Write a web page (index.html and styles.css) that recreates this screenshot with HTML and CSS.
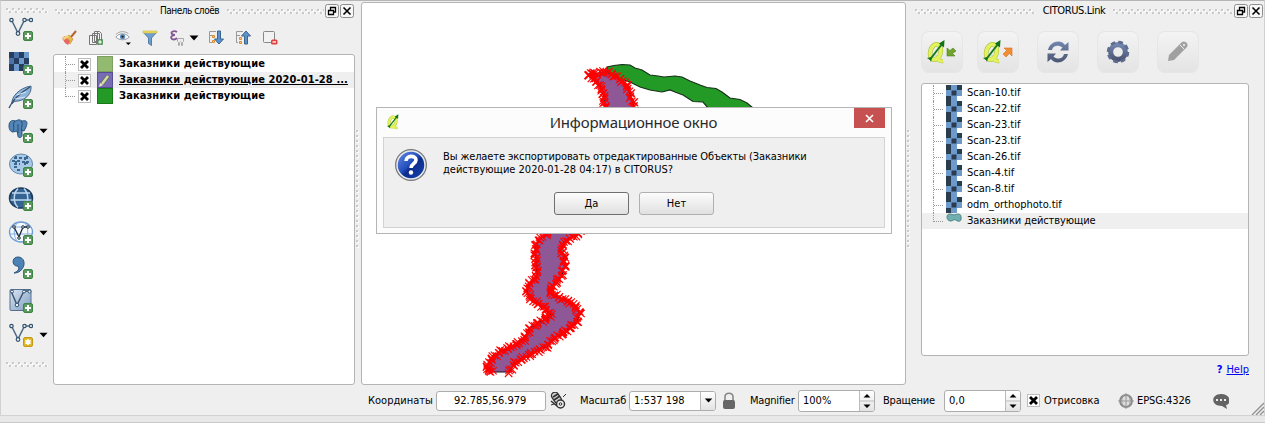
FILE: index.html
```html
<!DOCTYPE html>
<html lang="ru">
<head>
<meta charset="utf-8">
<title>QGIS</title>
<link rel="stylesheet" href="styles.css">
</head>
<body>
<svg class="defs" width="0" height="0">
  <defs>
    <linearGradient id="steel" x1="0" y1="0" x2="0" y2="1"><stop offset="0" stop-color="#7386ae"/><stop offset="1" stop-color="#4b5672"/></linearGradient>
    <linearGradient id="ball" x1="0" y1="0" x2="1" y2="1"><stop offset="0" stop-color="#6f93ea"/><stop offset=".45" stop-color="#2450bd"/><stop offset=".55" stop-color="#0c2c8c"/><stop offset="1" stop-color="#1a49b8"/></linearGradient>
    <linearGradient id="pane" x1="0" y1="0" x2="1" y2="1"><stop offset="0" stop-color="#dbe6f3"/><stop offset="1" stop-color="#7e9cc0"/></linearGradient>
    <symbol id="plus" viewBox="0 0 10 10"><rect x=".5" y=".5" width="9" height="9" rx="1.500" fill="#5b9a5d" stroke="#3f8344"/><path d="M5 2v6M2 5h6" stroke="#fff" stroke-width="2"/></symbol>
    <symbol id="vee" viewBox="0 0 24 20"><path d="M2.500 3 9 16 15.500 3H22" fill="none" stroke="#4c6a86" stroke-width="1.500"/><g fill="#e8eef5" stroke="#35536f" stroke-width="1.200"><circle cx="2.500" cy="3" r="1.700"/><circle cx="9" cy="16.500" r="1.800"/><circle cx="15.500" cy="3" r="1.700"/><circle cx="22" cy="3" r="1.700"/></g></symbol>
    <symbol id="tif" viewBox="0 0 16 16"><path fill="#6e99cb" d="M0 5h16v6H0zM5 0h6v16H5z"/><path fill="#293c50" d="M0 0h5v5H0zM11 0h5v5h-5zM5.500 5.500h5v5h-5zM0 11h5v5H0z"/></symbol>
    <symbol id="qlogo" viewBox="0 0 20 24"><ellipse cx="8.500" cy="12" rx="5.200" ry="7.800" transform="rotate(14 8.500 12)" fill="none" stroke="#a9ba3c" stroke-width="4.600"/><path fill="none" stroke="#a9ba3c" stroke-width="4" d="M8 17c2 1 3 5 8 4"/><ellipse cx="8.500" cy="12" rx="5.200" ry="7.800" transform="rotate(14 8.500 12)" fill="none" stroke="#e2f25c" stroke-width="3.600"/><path fill="none" stroke="#e2f25c" stroke-width="3" d="M8 17c2 1 3 5 8 4"/><path d="M3 19.500 15 4" stroke="#167a1d" stroke-width="2"/><path fill="#107217" d="m17.500 0-.5 7.500-5-4zM0 18l5-1-1 5-1-2z"/></symbol>
    <symbol id="float" viewBox="0 0 14 14"><rect x=".5" y=".5" width="13" height="13" rx="2" fill="#f6f6f6" stroke="#8d8d8d"/><path fill="none" stroke="#000" stroke-width="1.300" d="M5.500 6V3.500h5V8H9M3.500 6.500H8.500V10.500H3.500z"/></symbol>
    <symbol id="close" viewBox="0 0 14 14"><rect x=".5" y=".5" width="13" height="13" rx="2" fill="#f6f6f6" stroke="#8d8d8d"/><path stroke="#000" stroke-width="1.600" d="m3.500 3.500 7 7m0-7-7 7"/></symbol>
    <symbol id="check" viewBox="0 0 13 13"><rect x=".5" y=".5" width="12" height="12" fill="#fff" stroke="#bdbdbd"/><path stroke="#000" stroke-width="2.800" d="m3 3 7 7m0-7-7 7"/></symbol>
    <symbol id="drop" viewBox="0 0 10 6"><path d="M.5.500h9L5 5.500z"/></symbol>
    <pattern id="dots" width="6" height="5" patternUnits="userSpaceOnUse"><path fill="#c9c9c9" d="M0 0h2v2H0zM3 3h2v2H3z"/><path fill="#fff" d="M2 1h1v2H1V2h1zM5 3h1v2H5z"/></pattern>
    <pattern id="vdots" width="4" height="5" patternUnits="userSpaceOnUse"><path fill="#fff" d="M1 1h2v2H1z"/><path fill="#c9c9c9" d="M0 0h2v2H0z"/></pattern>
  </defs>
</svg>

<div class="window">
  <div class="main">
    <aside class="toolbar">
      <svg class="grip" width="42" height="5"><rect width="42" height="5" fill="url(#dots)"/></svg>
      <div class="tool"><svg width="26" height="26"><use href="#vee" x="1" y="1" width="24" height="20"/><use href="#plus" x="15" y="15" width="10" height="10"/></svg></div>
      <div class="tool"><svg width="26" height="26"><path fill="#6e99cb" d="M1 2h20v19H1z"/><path fill="#263d5f" d="M1 2h5v6H1zM11 2h5v6h-5zM6 8h5v6H6zM16 8h5v6h-5zM1 14h5v7H1zM11 14h5v7h-5z"/><path fill="#4a73aa" d="M6 2h5v6H6zM1 8h5v6H1z"/><use href="#plus" x="15" y="15" width="10" height="10"/></svg></div>
      <div class="tool"><svg width="26" height="26"><path fill="#8fb4da" stroke="#466789" d="M4 20C3 13 11 4 23 2c1 7-5 14-13 15-3 0-5 1-6 3z"/><path fill="none" stroke="#2f4d6d" stroke-width="1.300" d="M1 24C5 15 12 9 22 3"/><path stroke="#dbe9f7" d="m9 11 9-3M7 15l10-2"/><use href="#plus" x="15" y="15" width="10" height="10"/></svg></div>
      <div class="tool"><svg width="26" height="26"><path fill="#5386b6" stroke="#2c567f" d="M1 8c0-6 4-6 7-5 3-2 4-1 6 0 5-1 6 1 4 6l-2 4-2-1v6c-1 2-4 2-4 0l-1-5-4 1C3 14 1 12 1 8z"/><path fill="none" stroke="#264c72" d="M7 3c-3 3 0 7-2 10M13 3c3 3-1 7 1 10M10 6v9"/><use href="#plus" x="15" y="15" width="10" height="10"/></svg><svg class="arrow"><use href="#drop"/></svg></div>
      <div class="tool"><svg width="26" height="26"><ellipse cx="13" cy="12" rx="11.500" ry="10" fill="#a9c9e8" stroke="#6289ae"/><path fill="none" stroke="#3b668e" stroke-width="2" stroke-dasharray="3 2" d="M6 6h13M4 9h8M6 12h6M14 10h7M6 15h5M9 18h4M8 4v12M17 5v9M19 4v8"/><use href="#plus" x="15" y="15" width="10" height="10"/></svg><svg class="arrow"><use href="#drop"/></svg></div>
      <div class="tool"><svg width="26" height="26"><ellipse cx="13" cy="12" rx="11.500" ry="10" fill="#356392" stroke="#1d3b5b" stroke-width="1.500"/><path fill="none" stroke="#bdd9f2" stroke-width="1.500" d="M4 7h18M2.500 14h21M10 2.500c-5 5-5 14 0 19M16 2.500c5 5 5 14 0 19"/><use href="#plus" x="15" y="15" width="10" height="10"/></svg></div>
      <div class="tool"><svg width="26" height="26"><ellipse cx="13" cy="12" rx="11.500" ry="10" fill="#f5f9fe" stroke="#6a9bd0" stroke-width="1.300"/><path fill="none" stroke="#86aedb" d="M3 7h20M1.500 14h23M10 2c-5 5-5 15 0 20M16 2c5 5 5 15 0 20"/><path fill="none" stroke="#1d2c3a" stroke-width="1.300" d="m6 7 5 10 4-10h5"/><g fill="#fff" stroke="#1d2c3a"><circle cx="6" cy="7" r="1.300"/><circle cx="11" cy="18" r="1.300"/><circle cx="15" cy="7" r="1.300"/><circle cx="20" cy="7" r="1.300"/></g><use href="#plus" x="15" y="15" width="10" height="10"/></svg><svg class="arrow"><use href="#drop"/></svg></div>
      <div class="tool"><svg width="26" height="26"><path fill="#4d82b5" stroke="#2b557d" d="M10 12c-6 1-7-9 0-9 6 0 8 7 4 12-2 3-5 4-8 4 4-2 6-4 4-7z"/><use href="#plus" x="15" y="15" width="10" height="10"/></svg></div>
      <div class="tool"><svg width="26" height="26"><rect x="2" y="1.500" width="21" height="21" rx="1" fill="url(#pane)" stroke="#55708e"/><path fill="none" stroke="#3c5873" stroke-width="1.500" d="m3 3 6 14 7-14h7"/><g fill="#eaf0f7" stroke="#35536f"><circle cx="4" cy="3.500" r="1.500"/><circle cx="9" cy="17" r="1.800"/><circle cx="16" cy="3.500" r="1.500"/><circle cx="21.500" cy="3.500" r="1.500"/></g><use href="#plus" x="15" y="15" width="10" height="10"/></svg></div>
      <div class="tool"><svg width="26" height="26"><use href="#vee" x="1" y="1" width="24" height="20"/><rect x="15.500" y="15.500" width="9" height="9" rx="1.500" fill="#dfb626" stroke="#c39b10"/><path stroke="#fff" stroke-width="1.500" d="M20 17v6M17.300 18.500l5.400 3M22.700 18.500l-5.400 3"/></svg><svg class="arrow"><use href="#drop"/></svg></div>
      <svg class="grip low" width="42" height="5"><rect width="42" height="5" fill="url(#dots)"/></svg>
    </aside>

    <section class="layers">
      <header class="dock-title"><svg class="rail"><rect width="100%" height="5" fill="url(#dots)"/></svg><span class="t-layers">Панель слоёв</span><svg class="rail"><rect width="100%" height="5" fill="url(#dots)"/></svg><svg class="wbtn"><use href="#float"/></svg><svg class="wbtn"><use href="#close"/></svg></header>
      <div class="layer-tools">
        <svg class="ic" viewBox="0 0 16 16"><path d="m15 1-5 6" stroke="#b8642c" stroke-width="2"/><path fill="#e8b74e" stroke="#c98732" stroke-width=".7" d="m8 5 4 4-3 5-6-5z"/><path fill="#e46a5f" d="m1 8 3-2 5 5-2 4-3-2z"/><path fill="#f3d576" d="m1 8 6-3 1 2-5 3z"/></svg>
        <svg class="ic" viewBox="0 0 16 16"><path fill="#f3f3f3" stroke="#777" d="M1.500 5.500h7v9h-7zM4.500 3.500h7v9h-7zM6.500 1.500h5l2 2v8h-7zM9.500 2v9"/><use href="#plus" x="9" y="9" width="6" height="6"/></svg>
        <svg class="ic eye" viewBox="0 0 18 16"><path fill="#fff" stroke="#8c9197" d="M1 7c4-5 11-5 15 0-4 4-11 4-15 0z"/><circle cx="8.500" cy="6.500" r="3" fill="#5e8fc0"/><circle cx="8.500" cy="6.500" r="1.300" fill="#222"/><path fill="none" stroke="#999" d="M1 4c4-4 10-4 14-1"/><path d="M12 13h6l-3 3z"/></svg>
        <svg class="ic" viewBox="0 0 16 16"><path fill="#6f9fce" stroke="#527da9" d="M1 2h14L9.500 8v7.500l-3-2V8z"/><path fill="#f0df5b" stroke="#c9b741" stroke-width=".6" d="M1 1h14v2H1z"/></svg>
        <svg class="ic" viewBox="0 0 16 16"><path fill="none" stroke="#835791" stroke-width="1.800" d="M8 2C5 0 1 2 3 4c1 1 2 1 3 1-3 0-5 2-3 4 2 1 4 0 5-1"/><path fill="#eee" stroke="#aaa" d="M8.500 8.500h6v3l-1 1v3h-1v-3l-1-1-1 1v3h-1v-3l-1-1z"/></svg>
        <svg class="arrow in"><use href="#drop"/></svg>
        <svg class="ic" viewBox="0 0 16 16"><path fill="none" stroke="#999" d="M8 1.500H1.500v11H4M2 5.500h3"/><path fill="#f2cf9f" stroke="#df8a2b" d="M4.500 5.500h2v2h-2zM4.500 10.500h2v2h-2z"/><path fill="#5d92ca" stroke="#39658f" d="M9.500 1h3v8h3L11 14 6.500 9h3z"/></svg>
        <svg class="ic" viewBox="0 0 16 16"><path fill="none" stroke="#999" d="M8 1.500H1.500v11H3M2 5.500h3"/><path fill="#f2cf9f" stroke="#df8a2b" d="M4.500 7.500h2v2h-2zM4.500 11.500h2v2h-2z"/><path fill="#5d92ca" stroke="#39658f" d="M9.500 14h3V6h3L11 1 6.500 6h3z"/></svg>
        <svg class="ic" viewBox="0 0 16 16"><rect x="1.500" y="1.500" width="11" height="11" rx="1" fill="#f2f2f2" stroke="#888"/><rect x="9" y="9.500" width="6.500" height="5" rx="1.500" fill="#e0413f"/><path stroke="#fff" stroke-width="1.300" d="M10.500 12h3.500"/></svg>
      </div>
      <div class="tree">
        <div class="layer"><i class="branch"></i><svg class="cb"><use href="#check"/></svg><i class="swatch pale"></i><b class="l1">Заказники действующие</b></div>
        <div class="layer active"><i class="branch"></i><svg class="cb"><use href="#check"/></svg><i class="swatch violet"><svg width="14" height="14"><path stroke="#5e7048" stroke-width="4" d="M4 11 10 3"/><path stroke="#d3dba8" stroke-width="2.500" d="M4 11 10 3"/><path fill="#f0e9bd" d="m1 14 1-4 3 2z"/></svg></i><b class="l2">Заказники действующие 2020-01-28 ...</b></div>
        <div class="layer last"><i class="branch"></i><svg class="cb"><use href="#check"/></svg><i class="swatch green"></i><b class="l1">Заказники действующие</b></div>
      </div>
    </section>

    <svg class="vgrip" width="4" height="120"><rect width="4" height="120" fill="url(#vdots)"/></svg>

    <div class="map">
      <svg viewBox="362 3 543 381" width="543" height="381">
        <path fill="#249a26" stroke="#18301a" stroke-width="1.200" d="M607 72V67L614 65.500 622 64.500 630 65 635 68 642 70 650 75 658 76 664 77 675 76 682 77 690 81 700 85 707 87.500 716 88.500 722 92 730 98 740 99.500 747 103 753 108H708L703 102 693 101.500 683 95 675 92 670 90 662 92 650 90 640 87 630 82 615 77Z"/>
        <path id="reserve" fill="#8e5796" stroke="#16101a" stroke-width="1.200" d="M588 74 607 72 617 77 625 83 629 90 631 98 635 108 625 150 600 210 577 235 567 240 561 248 564 257 565 265 562 275 555 284 549 292 560 298 572 303 580 312 577 322 565 332 552 340 548 346 535 352 520 360 514 364 510 372H493L486 369 492 358 500 352 515 345 524 340 530 328 540 322 551 315 545 308 532 300 527 293 528 285 537 276 536 262 535 250 538 240 546 234 580 200 604 150 605 107 603 92 598 83Z"/>
        <g id="vertices" fill="none" stroke="#f00" stroke-width="1.100"></g>
      </svg>
    </div>

    <svg class="vgrip right" width="4" height="120"><rect width="4" height="120" fill="url(#vdots)"/></svg>

    <section class="link">
      <header class="dock-title"><svg class="rail"><rect width="100%" height="5" fill="url(#dots)"/></svg><span class="t-link">CITORUS.Link</span><svg class="rail"><rect width="100%" height="5" fill="url(#dots)"/></svg><svg class="wbtn"><use href="#float"/></svg><svg class="wbtn"><use href="#close"/></svg></header>
      <div class="link-tools">
        <div class="big"><svg width="30" height="26"><use href="#qlogo" x="0" y="1" width="20" height="24"/><path fill="#6fa52c" stroke="#538022" stroke-width=".6" d="M20 9v8h8l-2.500-2.500L29 12l-3-3-3 2.500z"/></svg></div>
        <div class="big"><svg width="30" height="26"><use href="#qlogo" x="0" y="1" width="20" height="24"/><path fill="#f08c33" stroke="#d87426" stroke-width=".6" d="M29 9v8l-2.500-2.500L23 18l-3-3 3.500-3.500L21 9z"/></svg></div>
        <div class="big"><svg width="24" height="24"><path fill="url(#steel)" d="M2 10C4 1 15-1 19 5l3.500-3v8.500H14l2.500-3C13 5 7 5 6 10zM22 14c-2 9-13 11-17 5l-3.500 3v-8.500H10l-2.500 3c3.500 3.500 9.500 2.500 10.500-2.500z"/></svg></div>
        <div class="big"><svg width="24" height="24" viewBox="-13 -13 26 26"><circle r="8" fill="none" stroke="url(#steel)" stroke-width="5.500"/><circle r="10.700" fill="none" stroke="#5d6b90" stroke-width="3" stroke-dasharray="5 3.400"/></svg></div>
        <div class="big"><svg width="24" height="24"><path fill="#a0a0a0" d="m2 21 1-6L16 2c3-2 7 2 5 5L8 20z"/><path stroke="#efefef" stroke-width="1" d="m14 5 4 4"/><circle cx="18" cy="5" r="1.200" fill="#ddd"/></svg></div>
      </div>
      <div class="files">
        <div class="file"><i class="branch"></i><svg><use href="#tif"/></svg><span class="f5">Scan-10.tif</span></div>
        <div class="file"><i class="branch"></i><svg><use href="#tif"/></svg><span class="f5">Scan-22.tif</span></div>
        <div class="file"><i class="branch"></i><svg><use href="#tif"/></svg><span class="f5">Scan-23.tif</span></div>
        <div class="file"><i class="branch"></i><svg><use href="#tif"/></svg><span class="f5">Scan-23.tif</span></div>
        <div class="file"><i class="branch"></i><svg><use href="#tif"/></svg><span class="f5">Scan-26.tif</span></div>
        <div class="file"><i class="branch"></i><svg><use href="#tif"/></svg><span class="f5">Scan-4.tif</span></div>
        <div class="file"><i class="branch"></i><svg><use href="#tif"/></svg><span class="f5">Scan-8.tif</span></div>
        <div class="file"><i class="branch"></i><svg><use href="#tif"/></svg><span class="f6">odm_orthophoto.tif</span></div>
        <div class="file last"><i class="branch"></i><svg><path fill="#70aeb0" stroke="#4d8587" d="M1 4c0-4 4-3 7-2 3-1 7-2 7 2 1 5-3 5-5 3-3-1-3 1-5 1-3 0-4-2-4-4z"/></svg><span class="f7">Заказники действующие</span></div>
      </div>
      <div class="help"><b>?</b><u>Help</u></div>
    </section>
  </div>

  <footer class="status">
    <span class="s-coord">Координаты</span>
    <div class="field coord"><span>92.785,56.979</span></div>
    <svg class="mouse" width="18" height="18"><g fill="none" stroke="#333"><rect x="3" y="0" width="7" height="12" rx="3.500" transform="rotate(-35 6 6)" fill="#ccc" stroke-width="1.300"/><path stroke-width="1.600" d="m3 5 5-3M4 8l6-4M1 9l6 5"/><circle cx="10.500" cy="12" r="4" fill="#eee" stroke-width="1.500"/><circle cx="10.500" cy="12" r="1.300"/><path d="m13 5 3-3M1 13l3-1"/></g></svg>
    <span class="s-scale">Масштаб</span>
    <div class="field scale"><span>1:537 198</span><i><svg class="arrow in"><use href="#drop"/></svg></i></div>
    <svg class="lock" width="14" height="18"><path fill="none" stroke="#888" stroke-width="1.600" d="M3 9V5c0-5 8-5 8 0v4"/><rect x="1" y="8" width="12" height="9" rx="2" fill="#666"/></svg>
    <span class="s-mag">Magnifier</span>
    <div class="field spin mag"><span>100%</span><i><svg viewBox="0 0 14 20"><path d="M3.500 6.500 7 3l3.500 3.500zM3.500 13.500 7 17l3.500-3.500z"/><path stroke="#bbb" d="M0 10h14"/></svg></i></div>
    <span class="s-rot">Вращение</span>
    <div class="field spin rot"><span>0,0</span><i><svg viewBox="0 0 14 20"><path d="M3.500 6.500 7 3l3.500 3.500zM3.500 13.500 7 17l3.500-3.500z"/><path stroke="#bbb" d="M0 10h14"/></svg></i></div>
    <svg class="cb"><use href="#check"/></svg>
    <span class="s-draw">Отрисовка</span>
    <svg class="crs" width="16" height="16"><circle cx="8" cy="8" r="6" fill="#ddd" stroke="#888" stroke-width="1.800"/><path fill="none" stroke="#999" d="M8 0v16M0 8h16M6 2c-3 4-3 8 0 12M10 2c3 4 3 8 0 12"/></svg>
    <span class="s-epsg">EPSG:4326</span>
    <svg class="msg" width="16" height="16"><path fill="#646464" d="M8 1c11 0 10 11 5 11l1 4-5-3C-3 13-2 1 8 1z"/><path stroke="#eee" stroke-width="2" d="M3 7h2M7 7h2M11 7h2"/></svg>
    <svg class="resize" width="13" height="13"><path stroke="#8e8e8e" stroke-width="1.300" d="M1 13 13 1M5 13l8-8M9 13l4-4"/></svg>
  </footer>
</div>

<div class="dialog">
  <div class="dialog-bar"><svg width="14" height="17"><use href="#qlogo" width="13" height="16"/></svg><span class="d-title">Информационное окно</span><span class="x"><svg width="9" height="9"><path stroke="#fff" stroke-width="1.600" d="m1 1 7 7m0-7-7 7"/></svg></span></div>
  <div class="dialog-body">
    <div class="message">
      <svg width="34" height="34"><circle cx="17" cy="17" r="15" fill="url(#ball)" stroke="#777" stroke-width="2"/><circle cx="17" cy="17" r="14" fill="none" stroke="#e4e8f0" stroke-width="1.500"/><path fill="none" stroke="#fff" stroke-width="3.600" d="M12 13c0-6 10-6 10-1 0 4-5 3.500-5 8"/><circle cx="17" cy="24.500" r="2.200" fill="#fff"/></svg>
      <p><span class="m1">Вы желаете экспортировать отредактированные Объекты (Заказники</span><br><span class="m2">действующие 2020-01-28 04:17) в CITORUS?</span></p>
    </div>
    <div class="actions"><button class="primary">Да</button><button>Нет</button></div>
  </div>
</div>
<script src="vertices.js"></script>
</body>
</html>
```
FILE: styles.css
```css
* { box-sizing: border-box; }
body { margin: 0; width: 1265px; height: 423px; overflow: hidden; background: #e8e8e8; color: #000; font: 11px/16px "DejaVu Sans Condensed", "Noto Sans", sans-serif; border-bottom: 1px solid #c9c9c9; }
svg { display: block; flex: none; }
span, b, u { white-space: nowrap; }
.defs { position: absolute; }
.window { height: 416px; background: #efefef; border: 1px solid #d2d2d2; border-top: 1px solid #b5b5b5; }
.main { display: flex; height: 385px; }
.toolbar { width: 52px; padding: 7px 0 0 5px; }
.tool { height: 34px; display: flex; align-items: center; gap: 5px; padding-left: 2px; }
.grip { margin-bottom: -1px; }
.grip.low { margin-top: 10px; }
.arrow { width: 9px; height: 6px; }
.layers { width: 302px; display: flex; flex-direction: column; }
.dock-title { height: 20px; display: flex; align-items: center; padding: 0 1px 0 2px; flex: none; }
.rail { height: 5px; width: 0; flex: 1; }
.dock-title span { padding: 0 8px; }
.t-layers { font-size: 10px; letter-spacing: -0.45px; }
.t-link { letter-spacing: -0.4px; }
.wbtn { width: 14px; height: 14px; margin-left: 1px; }
.layer-tools { height: 33px; display: flex; align-items: center; padding: 0 0 0 8px; gap: 11px; }
.ic { width: 16px; height: 16px; }
.arrow.in { width: 10px; margin: 0 -2px 0 -7px; }
.tree, .files { background: #fff; border: 1px solid #b4b4b4; border-radius: 3px; }
.tree { height: 331px; padding-top: 1px; }
.layer { height: 16px; display: flex; align-items: center; padding-left: 11px; }
.active { background: #efefef; text-decoration: underline; }
.l1, .l2 { letter-spacing: 0.1px; }
.branch { width: 10px; height: 16px; border-left: 1px dotted #999; background: repeating-linear-gradient(90deg, #999 0 1px, transparent 1px 2px) 0 8px / 10px 1px no-repeat; }
.last .branch { height: 9px; align-self: flex-start; }
.cb { width: 13px; height: 13px; }
.layer .cb { margin: 0 6px 0 3px; }
.swatch { width: 16px; height: 16px; margin-right: 6px; border: 1px solid #5c743c; }
.pale { background: #92bb6f; border-color: #7e9e62; }
.violet { background: #776bb5; border-color: #574e91; }
.green { background: #249a26; border-color: #197a1b; }
.vgrip { margin: 129px 1px 0 1px; }
.vgrip.right { margin: 129px 0 0 1px; }
.map { width: 545px; height: 383px; margin-top: 1px; background: #fff; border: 1px solid #b4b4b4; border-radius: 3px; overflow: hidden; }
.link { flex: 1; display: flex; flex-direction: column; padding-left: 2px; }
.link .dock-title { padding-right: 1px; }
.link-tools { display: flex; gap: 18px; padding: 10px 0 0 8px; height: 62px; }
.big { width: 42px; height: 42px; display: flex; align-items: center; justify-content: center; border: 1px solid #e6e6e6; border-radius: 8px; background: linear-gradient(#f3f3f3, #e4e4e4); }
.big:first-child { margin-right: -4px; }
.files { width: 328px; height: 273px; margin-left: 8px; padding-top: 1px; }
.file { height: 16px; display: flex; padding-left: 11px; }
.file svg { width: 16px; height: 16px; margin: 0 5px 0 3px; }
.file.last { background: #efefef; }
.f7 { letter-spacing: -0.1px; }
.help { width: 328px; margin: 6px 0 0 8px; display: flex; justify-content: flex-end; gap: 4px; color: #0000f0; }
.status { height: 29px; display: flex; align-items: center; padding-left: 367px; position: relative; }
.field { height: 20px; display: flex; align-items: center; background: #fff; border: 1px solid #adadad; border-radius: 3px; padding-left: 4px; overflow: hidden; }
.field i { display: flex; align-items: center; justify-content: center; height: 100%; width: 15px; margin-left: auto; border-left: 1px solid #bbb; background: linear-gradient(#fff, #e3e3e3); }
.field i .arrow { margin: 0; width: 9px; height: 5px; }
.spin { height: 22px; }
.spin i svg { width: 14px; height: 20px; }
.s-coord { width: 68px; }
.coord { width: 110px; padding-left: 17px; }
.mouse { margin: 0 0 0 4px; }
.s-scale { width: 49px; margin-left: 12px; letter-spacing: -0.1px; }
.scale { width: 87px; }
.lock { margin-left: 6px; }
.s-mag { width: 48px; margin-left: 14px; letter-spacing: -0.2px; }
.mag { width: 77px; }
.s-rot { width: 61px; margin-left: 8px; letter-spacing: -0.2px; }
.rot { width: 77px; }
.status > .cb { margin-left: 6px; }
.s-draw { width: 74px; margin-left: 4px; }
.s-epsg { width: 76px; margin-left: 3px; letter-spacing: -0.1px; }
.crs { margin-left: 0; }
.resize { position: absolute; right: 0; bottom: 0; }
.dialog { position: absolute; left: 376px; top: 107px; width: 516px; height: 127px; padding: 0 6px; background: #fcfcfc; border: 1px solid #b5b5b5; }
.dialog-bar { height: 29px; display: flex; align-items: center; padding-left: 4px; }
.dialog-bar .d-title { flex: 1; text-align: center; font: 15px/20px "Noto Sans", sans-serif; letter-spacing: -0.2px; color: #2a2a2a; padding: 0 0 2px 12px; }
.x { width: 31px; height: 20px; background: #c75050; display: flex; align-items: center; justify-content: center; align-self: flex-start; }
.dialog-body { height: 91px; border: 1px solid #d3d3d3; background: #efefef; }
.message { display: flex; padding: 10px 0 0 10px; height: 54px; }
.message p { margin: 0 0 0 15px; line-height: 13px; padding-top: 2px; }
.m1 { letter-spacing: -0.12px; }
.actions { display: flex; gap: 10px; padding-left: 170px; }
button { width: 75px; height: 23px; padding: 0; font: inherit; color: #000; border: 1px solid #b0b0b0; border-radius: 3px; background: linear-gradient(#fcfcfc, #e0e0e0); }
.primary { border-color: #6f6f6f; }
```
FILE: vertices.js
```js
// Draws the edit-mode cross markers along the outline of the edited polygon.
const outline = document.getElementById('reserve');
const total = outline.getTotalLength();
let d = '';
for (let s = 0, n = 0; s < total; s += 1.6, n++) {
  const p = outline.getPointAtLength(s);
  const x = p.x + Math.sin(n * 7.3) * 1.3;
  const y = p.y + Math.cos(n * 4.1) * 1.3;
  if (p.y > 371.5 && p.x > 494 && p.x < 509) continue;
  d += `M${x - 3.7} ${y - 3.7}l7.4 7.4m0-7.4l-7.4 7.4`;
}
const marks = document.createElementNS('http://www.w3.org/2000/svg', 'path');
marks.setAttribute('d', d);
document.getElementById('vertices').appendChild(marks);
```
